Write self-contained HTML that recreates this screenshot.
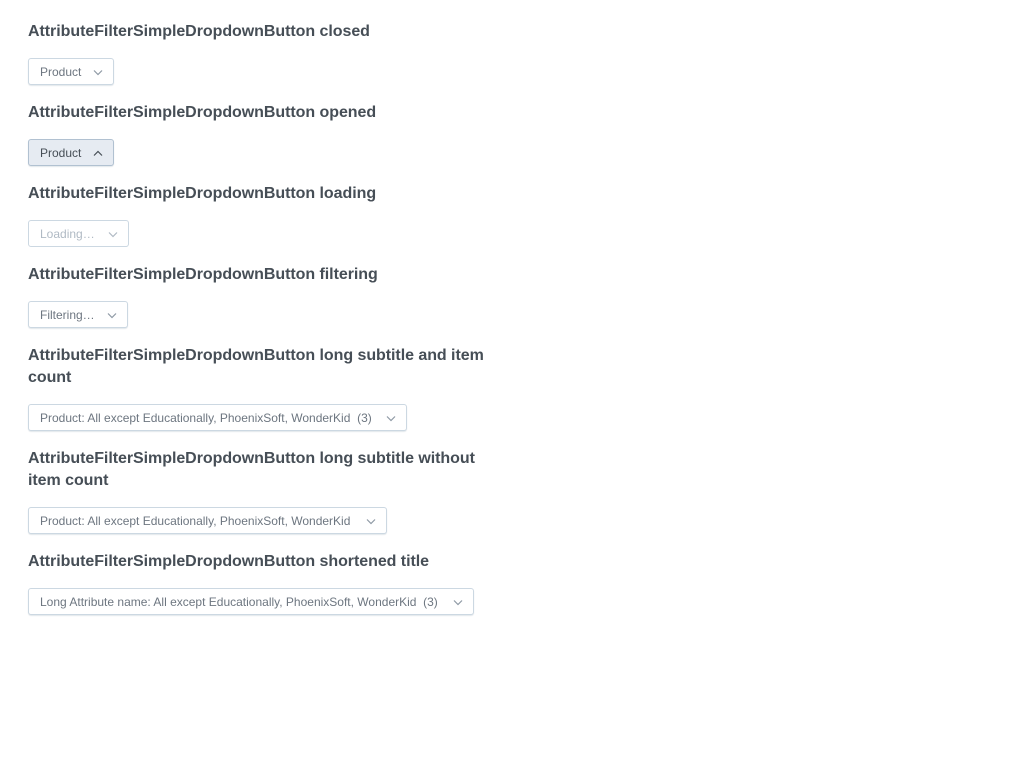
<!DOCTYPE html>
<html><head><style>
body{margin:0;background:#fff;font-family:"Liberation Sans",sans-serif;}
h3{position:absolute;left:28px;margin:0;font-size:16px;line-height:22px;font-weight:bold;color:#464e56;width:470px;letter-spacing:-0.05px;}
.b{position:absolute;left:28px;height:25px;border:1px solid #ccd8e2;border-radius:3px;background:#fff;box-shadow:0 1px 1px rgba(20,56,93,.12);font-size:12px;color:#6d7680;line-height:27px;padding-left:11px;box-sizing:content-box;white-space:nowrap;}
.b svg{position:absolute;right:10px;top:10px;}
.o{background:#e6ebf2;border-color:#b1c1d1;color:#464e56;}
.l{color:#b0bac4;box-shadow:none;}
</style></head><body>
<h3 style="top:21px">AttributeFilterSimpleDropdownButton closed</h3>
<div class="b" style="top:58px;width:73px">Product<svg width="10" height="7" viewBox="0 0 10 7"><path d="M1 1.5l4 4 4-4" fill="none" stroke="#8e99a5" stroke-width="1.2"/></svg></div>
<h3 style="top:102px">AttributeFilterSimpleDropdownButton opened</h3>
<div class="b o" style="top:139px;width:73px">Product<svg width="10" height="7" viewBox="0 0 10 7"><path d="M1 5.5l4-4 4 4" fill="none" stroke="#464e56" stroke-width="1.2"/></svg></div>
<h3 style="top:183px">AttributeFilterSimpleDropdownButton loading</h3>
<div class="b l" style="top:220px;width:88px">Loading…<svg width="10" height="7" viewBox="0 0 10 7"><path d="M1 1.5l4 4 4-4" fill="none" stroke="#b0bac4" stroke-width="1.2"/></svg></div>
<h3 style="top:264px">AttributeFilterSimpleDropdownButton filtering</h3>
<div class="b" style="top:301px;width:87px">Filtering…<svg width="10" height="7" viewBox="0 0 10 7"><path d="M1 1.5l4 4 4-4" fill="none" stroke="#8e99a5" stroke-width="1.2"/></svg></div>
<h3 style="top:345px">AttributeFilterSimpleDropdownButton long subtitle and item count</h3>
<div class="b" style="top:404px;width:366px">Product: All except Educationally, PhoenixSoft, WonderKid&nbsp; (3)<svg width="10" height="7" viewBox="0 0 10 7"><path d="M1 1.5l4 4 4-4" fill="none" stroke="#8e99a5" stroke-width="1.2"/></svg></div>
<h3 style="top:448px">AttributeFilterSimpleDropdownButton long subtitle without item count</h3>
<div class="b" style="top:507px;width:346px">Product: All except Educationally, PhoenixSoft, WonderKid<svg width="10" height="7" viewBox="0 0 10 7"><path d="M1 1.5l4 4 4-4" fill="none" stroke="#8e99a5" stroke-width="1.2"/></svg></div>
<h3 style="top:551px">AttributeFilterSimpleDropdownButton shortened title</h3>
<div class="b" style="top:588px;width:433px">Long Attribute name: All except Educationally, PhoenixSoft, WonderKid&nbsp; (3)<svg width="10" height="7" viewBox="0 0 10 7"><path d="M1 1.5l4 4 4-4" fill="none" stroke="#8e99a5" stroke-width="1.2"/></svg></div>
</body></html>
